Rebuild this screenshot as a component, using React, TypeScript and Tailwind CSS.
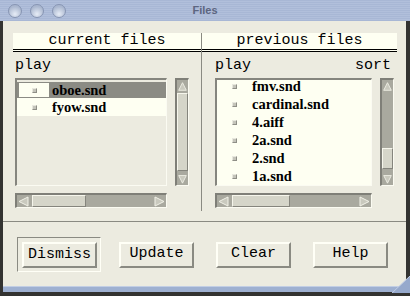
import React from 'react';

const mono = "font-['Liberation_Mono','DejaVu_Sans_Mono',monospace]";
const serif = "font-['Liberation_Serif','Times_New_Roman',serif]";

const Arrow: React.FC<{ dir: 'up' | 'down' | 'left' | 'right' }> = ({ dir }) => {
  const pts = {
    up: '6.5,2 11,11 2,11',
    down: '2,3 11,3 6.5,12',
    left: '2,6.5 11,2 11,11',
    right: '2,2 11,6.5 2,11',
  }[dir];
  return (
    <svg width="13" height="13" viewBox="0 0 13 13" className="block">
      <polygon points={pts} fill="#c9c9be" stroke="#f2f2e8" strokeWidth="1" />
    </svg>
  );
};

// vertical scroll bar, thumb given in px from top of trough
const VScroll: React.FC<{ thumbTop: number; thumbH: number }> = ({ thumbTop, thumbH }) => (
  <div className="w-[14px] h-[108px] flex flex-col bg-[#a9a99f] border-t-2 border-l-2 border-[#7f7f78] border-r border-b border-r-[#fbfbf2] border-b-[#fbfbf2]">
    <div className="h-[13px] flex items-center justify-center">
      <Arrow dir="up" />
    </div>
    <div className="flex-1 relative">
      <div
        className="absolute left-0 right-0 bg-[#d5d5c9] border-t border-l border-[#f6f6ec] border-r border-b border-r-[#85857d] border-b-[#85857d]"
        style={{ top: thumbTop, height: thumbH }}
      />
    </div>
    <div className="h-[14px] flex items-center justify-center">
      <Arrow dir="down" />
    </div>
  </div>
);

const HScroll: React.FC<{ width: number; thumbLeft: number; thumbW: number }> = ({ width, thumbLeft, thumbW }) => (
  <div
    className="h-[15px] mt-[7px] flex bg-[#a9a99f] border-t-2 border-l-2 border-[#7f7f78] border-r border-b border-r-[#fbfbf2] border-b-[#fbfbf2]"
    style={{ width }}
  >
    <div className="w-[13px] flex items-center justify-center">
      <Arrow dir="left" />
    </div>
    <div className="flex-1 relative">
      <div
        className="absolute top-0 bottom-0 bg-[#d5d5c9] border-t border-l border-[#f6f6ec] border-r border-b border-r-[#85857d] border-b-[#85857d]"
        style={{ left: thumbLeft, width: thumbW }}
      />
    </div>
    <div className="w-[13px] flex items-center justify-center">
      <Arrow dir="right" />
    </div>
  </div>
);

const Check: React.FC = () => (
  <span className="block w-[5px] h-[5px] bg-[#c4c4ba] border border-t-[#e8e8de] border-l-[#e8e8de] border-r-[#8e8e86] border-b-[#8e8e86]" />
);

const FileRow: React.FC<{ name: string; selected?: boolean }> = ({ name, selected }) => (
  <div className={`flex items-center ${selected ? 'h-[16px] bg-[#8b8b84]' : 'h-[18px] bg-[#fefff2]'}`}>
    <div className={`w-[30px] ml-[2px] h-[14px] flex items-center justify-center ${selected ? 'bg-[#fefff2]' : ''}`}>
      <Check />
    </div>
    <span className={`${serif} ml-[3px] text-[14.5px] font-bold text-black leading-none`}>{name}</span>
  </div>
);

const Header: React.FC<{ title: string }> = ({ title }) => (
  <div>
    <div className={`h-[16px] bg-[#fefff2] flex items-center justify-center ${mono} text-[15px] text-black`}>
      {title}
    </div>
    <div className="h-px bg-black" />
    <div className="h-px bg-[#fefff2]" />
    <div className="h-px bg-black" />
  </div>
);

const Button: React.FC<{ label: string; className?: string }> = ({ label, className = '' }) => (
  <button
    className={`w-[75px] h-[26px] bg-[#ecebe0] border-2 border-t-[#fffff6] border-l-[#fffff6] border-r-[#8a8a82] border-b-[#8a8a82] ${mono} text-[15px] text-black flex items-center justify-center ${className}`}
  >
    {label}
  </button>
);

export default function App() {
  const previous = ['fmv.snd', 'cardinal.snd', '4.aiff', '2a.snd', '2.snd', '1a.snd'];

  return (
    <div className="w-[410px] h-[296px] bg-[#333331] flex flex-col relative overflow-hidden">
      {/* title bar */}
      <div className="h-[21px] relative flex items-center justify-center bg-[repeating-linear-gradient(0deg,#a8b7d5_0px,#a8b7d5_1px,#b1bfdb_1px,#b1bfdb_2px)]">
        <div className="absolute left-[8px] top-[4px] flex gap-[8px]">
          {[0, 1, 2].map((i) => (
            <span
              key={i}
              className="block w-[14px] h-[14px] rounded-full border border-[#8795b3] bg-[radial-gradient(circle_at_50%_75%,#e6ecf6,#aab7cf_70%)]"
            />
          ))}
        </div>
        <span className="font-['Liberation_Sans',Arial,sans-serif] text-[11px] font-bold text-[#5c6580]">Files</span>
      </div>

      {/* body */}
      <div className="flex-1 mx-[3px] mr-[4px] bg-[#ecebe0] flex flex-col pt-[12px]">
        <div className="flex pl-[10px] h-[178px]">
          {/* current files */}
          <div className="w-[188px] flex flex-col">
            <Header title="current files" />
            <div className="pl-[2px]">
              <div className={`mt-[5px] h-[18px] leading-[18px] ${mono} text-[15px] text-black`}>play</div>
              <div className="mt-[3px] flex gap-[8px]">
                <div className="w-[152px] h-[108px] border-t-2 border-l-2 border-[#85857e] border-r border-b border-r-[#fbfbf2] border-b-[#fbfbf2] pt-[2px] bg-[#ecebe0] overflow-hidden">
                  <FileRow name="oboe.snd" selected />
                  <FileRow name="fyow.snd" />
                </div>
                <VScroll thumbTop={0} thumbH={78} />
              </div>
              <HScroll width={152} thumbLeft={2} thumbW={54} />
            </div>
          </div>

          <div className="w-px bg-[#8a8a82]" />

          {/* previous files */}
          <div className="w-[195px] flex flex-col">
            <Header title="previous files" />
            <div className="pl-[13px]">
              <div className={`mt-[5px] h-[18px] leading-[18px] ${mono} text-[15px] text-black flex justify-between pr-[6px]`}>
                <span>play</span>
                <span>sort</span>
              </div>
              <div className="mt-[3px] flex gap-[8px]">
                <div className="w-[157px] h-[108px] border-t-2 border-l-2 border-[#85857e] border-r border-b border-r-[#fbfbf2] border-b-[#fbfbf2] bg-[#fefff2] overflow-hidden">
                  <div className="-mt-[3px]">
                    {previous.map((f) => (
                      <FileRow key={f} name={f} />
                    ))}
                  </div>
                </div>
                <VScroll thumbTop={55} thumbH={21} />
              </div>
              <HScroll width={157} thumbLeft={2} thumbW={58} />
            </div>
          </div>
        </div>

        <div className="mt-[10px] h-px bg-[#8a8a82]" />

        {/* buttons */}
        <div className="mt-[15px] flex items-center pl-[14px]">
          <div className="pt-[4px] pb-[3px] pl-[4px] pr-[3px] border border-t-[#8a8a82] border-l-[#8a8a82] border-r-[#fffff6] border-b-[#fffff6]">
            <Button label="Dismiss" className="w-[74px]" />
          </div>
          <Button label="Update" className="ml-[18px]" />
          <Button label="Clear" className="ml-[22px]" />
          <Button label="Help" className="ml-[22px]" />
        </div>
      </div>

      {/* bottom bar */}
      <div className="h-[6px] mx-[3px] mr-[4px] bg-[#9eb0d1] border-t border-[#c2cee4]" />
      <div className="h-[4px]" />

      <svg width="18" height="17" viewBox="0 0 18 17" className="absolute right-0 bottom-[3px]">
        <polygon points="0,17 18,0 18,17" fill="#96a9cc" />
        <line x1="0" y1="17" x2="18" y2="0" stroke="#c2cee4" strokeWidth="1" />
      </svg>
    </div>
  );
}
